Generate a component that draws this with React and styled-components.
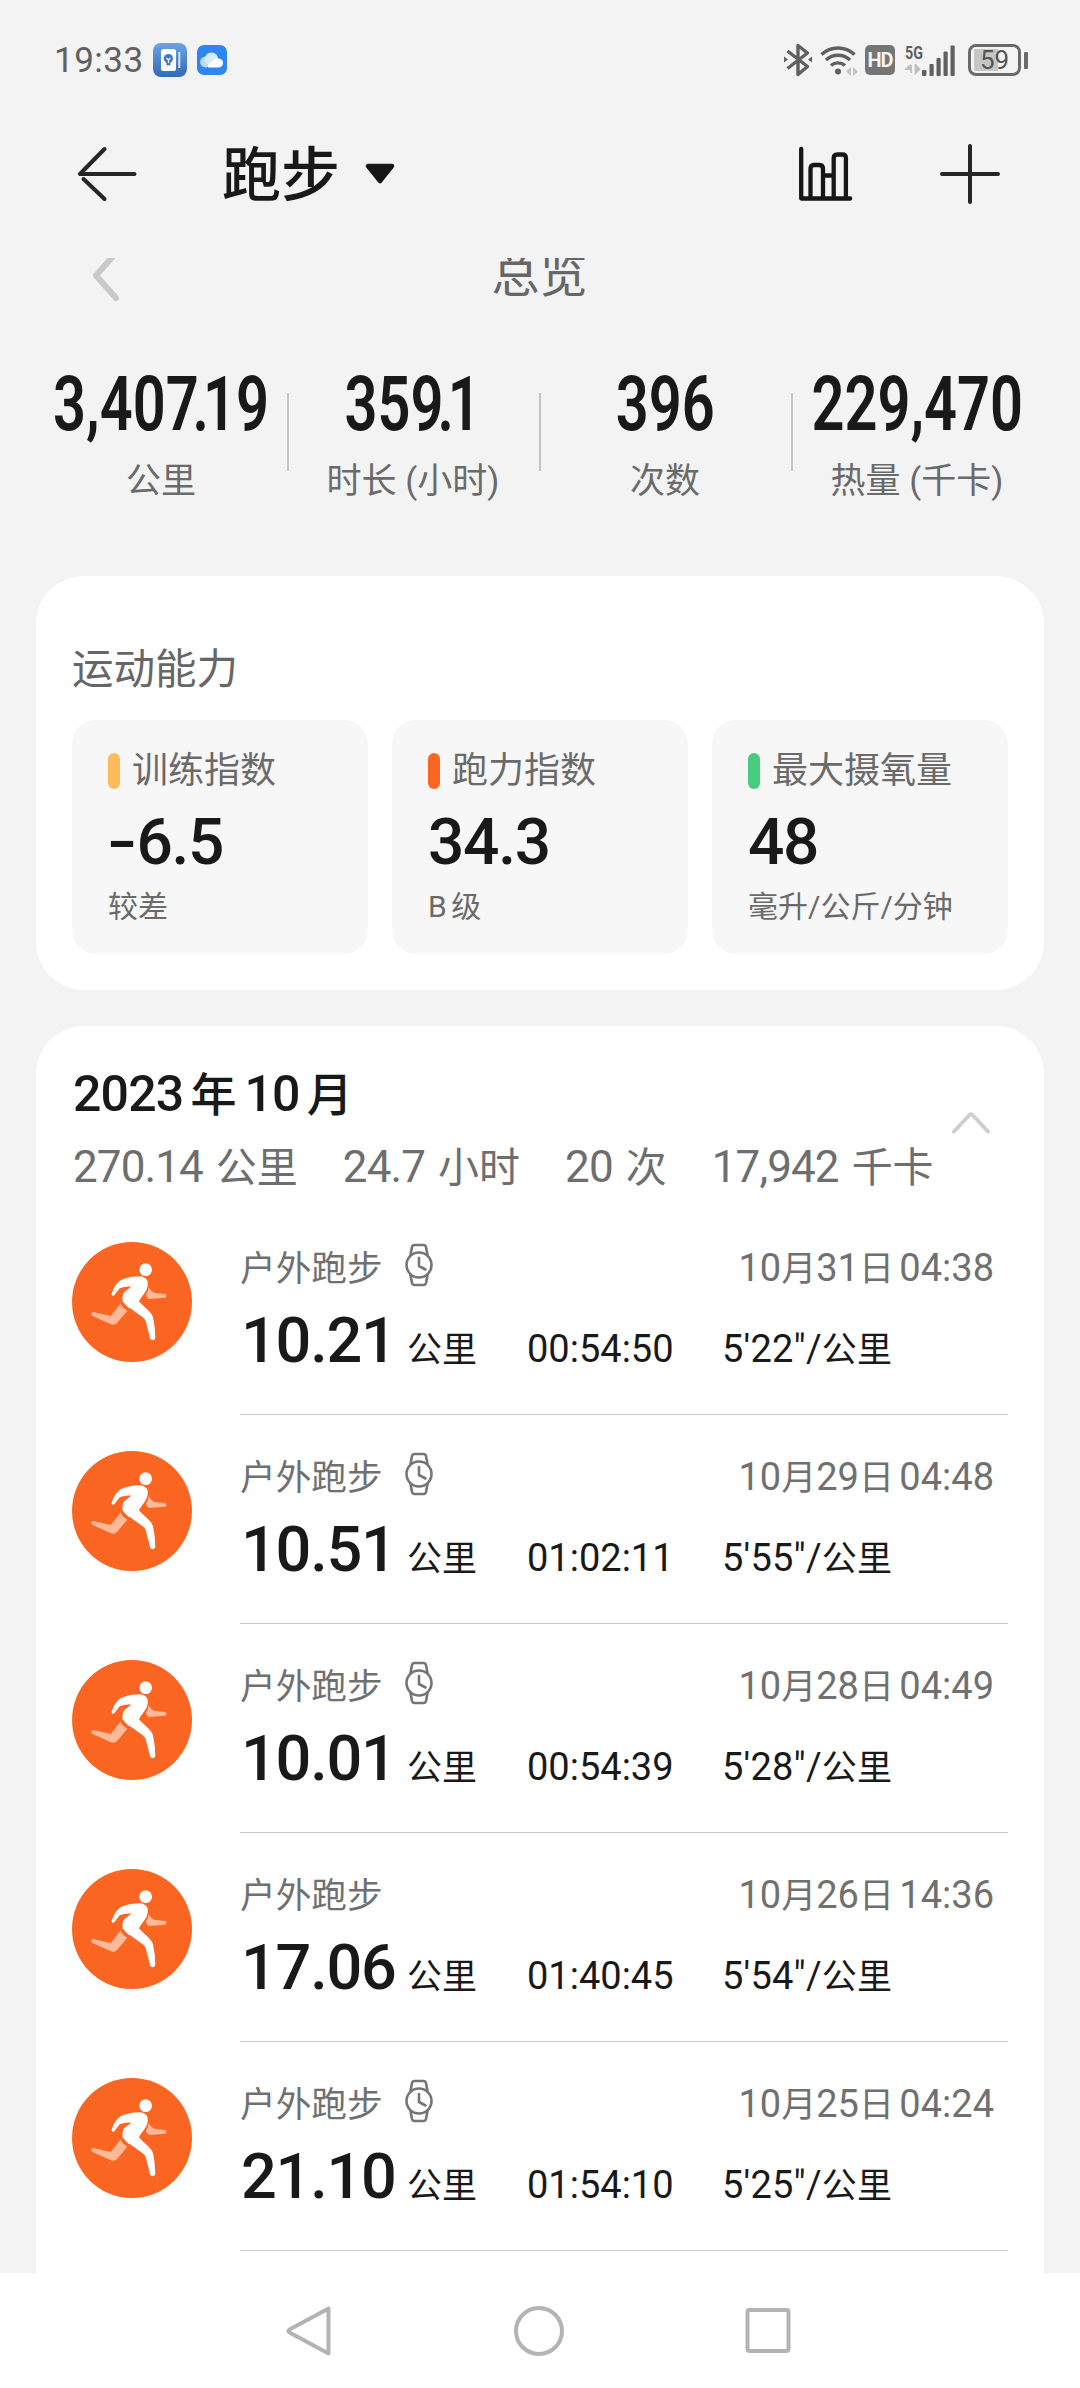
import React from 'react'
import styled, { createGlobalStyle } from 'styled-components'

// "tight" is the part of the number that is set closer together
const totals = [
  { start: '3,40', tight: '7.', end: '19', label: '公里' },
  { start: '35', tight: '9.', end: '1', label: '时长 (小时)' },
  { start: '396', label: '次数' },
  { start: '229,470', label: '热量 (千卡)' },
]

const abilities = [
  { name: '训练指数', sign: '-', value: '6.5', note: '较差', color: '#fdbb5c' },
  { name: '跑力指数', value: '34.3', note: 'B 级', color: '#fb6522' },
  { name: '最大摄氧量', value: '48', note: '毫升/公斤/分钟', color: '#47cc7f' },
]

const month = [
  { value: '270.14', unit: '公里' },
  { value: '24.7', unit: '小时' },
  { value: '20', unit: '次' },
  { value: '17,942', unit: '千卡' },
]

const runs = [
  { day: '31', time: '04:38', distance: '10.21', duration: '00:54:50', pace: '5\'22"', watch: true },
  { day: '29', time: '04:48', distance: '10.51', duration: '01:02:11', pace: '5\'55"', watch: true },
  { day: '28', time: '04:49', distance: '10.01', duration: '00:54:39', pace: '5\'28"', watch: true },
  { day: '26', time: '14:36', distance: '17.06', duration: '01:40:45', pace: '5\'54"', watch: false },
  { day: '25', time: '04:24', distance: '21.10', duration: '01:54:10', pace: '5\'25"', watch: true },
]

const NotesIcon = () => (
  <svg width="34" height="34" viewBox="0 0 34 34">
    <defs>
      <linearGradient id="notes" x1="0" y1="0" x2="0" y2="1">
        <stop offset="0" stopColor="#6aa3e6" />
        <stop offset="1" stopColor="#3567b8" />
      </linearGradient>
    </defs>
    <rect width="34" height="34" rx="8" fill="url(#notes)" />
    <rect x="8" y="6" width="15" height="22" rx="2.5" fill="#fff" />
    <circle cx="15.4" cy="15.6" r="4.6" fill="#3f77c9" />
    <path d="M13.4 19h4v3.4h-4z" fill="#3f77c9" />
    <path d="M13.3 15l2.1 2 2.1-2M15.4 17v3" stroke="#fff" strokeWidth="1.1" fill="none" />
    <path d="M26.3 9v16" stroke="#d5e3f7" strokeWidth="2" />
  </svg>
)

const CloudIcon = () => (
  <svg width="30" height="30" viewBox="0 0 30 30">
    <rect width="30" height="30" rx="7" fill="#2f86f3" />
    <circle cx="8.5" cy="17" r="5.4" fill="#bcdcff" />
    <circle cx="14.5" cy="14" r="6.6" fill="#d9ebff" />
    <path d="M11 22.4a6 6 0 0 1 4.6-6 6 6 0 0 1 7.2-2.6 4.4 4.4 0 0 1-.6 8.6z" fill="#fff" />
  </svg>
)

const BluetoothIcon = () => (
  <svg width="30" height="36" viewBox="0 0 30 36" fill="none" stroke="#606060" strokeWidth="3.4" strokeLinejoin="round">
    <path d="M4.5 9l20 15.5L15 32.5v-29L24.5 11 4.5 26.5" />
    <path d="M1 14.5l4 3-4 3zM29 14.5l-4 3 4 3z" fill="#606060" stroke="none" />
  </svg>
)

const WifiIcon = () => (
  <svg width="38" height="34" viewBox="0 0 38 34" fill="none" stroke="#606060" strokeWidth="3.4">
    <path d="M1.5 11.5a24 24 0 0 1 33 0M6 17a17.5 17.5 0 0 1 24 0M11 22.5a10.5 10.5 0 0 1 14 0" />
    <circle cx="18" cy="28.5" r="3" fill="#606060" stroke="none" />
    <path d="M31 24v9l-5-4.5zM33 24v9l5-4.5z" fill="#c4c4c4" stroke="none" />
  </svg>
)

const SignalIcon = () => (
  <svg width="52" height="34" viewBox="0 0 52 34">
    <path d="M6 22v8M6 22l-5 4h5M10.5 21v9l4.5-4.5" fill="#bfbfbf" stroke="#bfbfbf" strokeWidth="1.8" />
    <g fill="#606060">
      <rect x="17" y="27" width="4.4" height="6" rx="1" />
      <rect x="24.5" y="21" width="4.2" height="12" rx="1" />
      <rect x="31.5" y="15" width="4.2" height="18" rx="1" />
      <rect x="38.5" y="8.5" width="4.2" height="24.5" rx="1" />
      <rect x="45.5" y="2.5" width="4.2" height="30.5" rx="1" />
    </g>
  </svg>
)

const BackIcon = () => (
  <svg width="60" height="56" viewBox="0 0 60 56" fill="none" stroke="#262626" strokeWidth="4" strokeLinecap="round">
    <path d="M27.5 3L3 28h54.5M6.5 33L27.5 53" strokeLinejoin="round" />
  </svg>
)

const StatsIcon = () => (
  <svg width="56" height="56" viewBox="0 0 56 56" fill="none" stroke="#161616" strokeWidth="4.3" strokeLinecap="round" strokeLinejoin="round">
    <path d="M3.2 3v49.500h49M12.500 52V23q0-4 3.500-4h5.500q3.500 0 3.500 4v29M35.700 52V12q0-3.500 3.500-3.500h5.200q3.500 0 3.500 3.500v40M25 29.500h10.700" />
  </svg>
)

const PlusIcon = () => (
  <svg width="60" height="60" viewBox="0 0 60 60" stroke="#262626" strokeWidth="4" strokeLinecap="round">
    <path d="M2 30h56M30 2v56" />
  </svg>
)

const RunnerIcon = () => (
  <svg width="120" height="120" viewBox="36 36 360 360">
    <circle cx="216" cy="216" r="180" fill="#fb6522" />
    <g fill="#ffb898">
      <path d="M266 171q8 16 20 18l30 3q7 5 0 11l-48 4q-8-1-10-14 8-10 8-22z" />
      <path d="M182 220q4 14 20 22l-30 36q-7 8-16 6l-60-27q-6-8 4-11l52 12q14-16 30-38z" />
    </g>
    <g fill="#fff">
      <circle cx="257" cy="119" r="19" />
      <path d="M155 191q8-26 26-40 26-12 58-12 20 2 24 16 2 18-8 32l-19 27 30 28q10 9 13 20 7 32 7 62-6 12-15 3l-14-53q-2-7-9-12l-50-36q-18-16-5-40l24-16q-22-2-38 5l-16 21q-8 4-8-5z" />
      <path d="M189 192l26-23 30-5-9 60-30 10-18-20z" />
    </g>
  </svg>
)

const WatchIcon = () => (
  <svg width="28" height="44" viewBox="0 0 28 44" fill="none" stroke="#757575" strokeWidth="2.6" strokeLinejoin="round" strokeLinecap="round">
    <circle cx="14" cy="22" r="12.5" />
    <path d="M5.500 12l1.500-8q.500-2 2.500-2h9q2 0 2.500 2l1.500 8M5.500 32l1.500 8q.500 2 2.500 2h9q2 0 2.500-2l1.500-8M14 15v8l6.500 3.500" />
  </svg>
)

const App = () => {
  return (
    <>
      <GlobalStyle />
      <Screen>
        <StatusBar>
          <Clock>19:33</Clock>
          <NotesIcon />
          <CloudIcon />
          <StatusRight>
            <BluetoothIcon />
            <WifiIcon />
            <HdBadge>HD</HdBadge>
            <Signal>
              <SignalIcon />
              <Network>5G</Network>
            </Signal>
            <Battery>
              <BatteryBody><span>59</span></BatteryBody>
              <BatteryTip />
            </Battery>
          </StatusRight>
        </StatusBar>

        <Header>
          <BackIcon />
          <Title>跑步</Title>
          <svg width="32" height="24" viewBox="0 0 32 24">
            <path d="M4 4h24L16 19z" fill="#161616" stroke="#161616" strokeWidth="4.5" strokeLinejoin="round" />
          </svg>
          <HeaderActions>
            <StatsIcon />
            <PlusIcon />
          </HeaderActions>
        </Header>

        <Content>
          <Overview>
            <svg width="30" height="56" viewBox="0 0 30 56" fill="none" stroke="#c9c9c9" strokeWidth="6" strokeLinecap="round" strokeLinejoin="round">
              <path d="M26 5L6 27.500 26 50" />
            </svg>
            <OverviewTitle>总览</OverviewTitle>
          </Overview>
          <Totals>
            {totals.map((item) => (
              <Total key={item.label}>
                <TotalValue>
                  {item.start}
                  {item.tight && <Tight>{item.tight}</Tight>}
                  {item.end}
                </TotalValue>
                <TotalLabel>{item.label}</TotalLabel>
              </Total>
            ))}
          </Totals>

          <AbilityCard>
            <CardTitle>运动能力</CardTitle>
            <Tiles>
              {abilities.map((item) => (
                <Tile key={item.name}>
                  <TileHead>
                    <Pill $color={item.color} />
                    {item.name}
                  </TileHead>
                  <TileValue>
                    {item.sign && <Sign>{item.sign}</Sign>}
                    {item.value}
                  </TileValue>
                  <TileNote>{item.note}</TileNote>
                </Tile>
              ))}
            </Tiles>
          </AbilityCard>

          <MonthCard>
            <MonthHead>
              <MonthTitle>
                <b>2023</b><span>年</span><b>10</b><span>月</span>
              </MonthTitle>
              <MonthStats>
                {month.map((item) => (
                  <MonthStat key={item.unit}>
                    <span>{item.value}</span>
                    {item.unit}
                  </MonthStat>
                ))}
              </MonthStats>
              <Collapse width="40" height="24" viewBox="0 0 40 24" fill="none" stroke="#cfcfcf" strokeWidth="4" strokeLinecap="round" strokeLinejoin="round">
                <path d="M3 20.500L18.500 4q1.500-1.200 3 0L37 20.500" />
              </Collapse>
            </MonthHead>
            {runs.map((run) => (
              <Run key={run.day}>
                <RunnerIcon />
                <RunBody>
                  <RunTop>
                    <RunName>户外跑步</RunName>
                    {run.watch && <WatchIcon />}
                    <RunDate>
                      <em>10</em>月<em>{run.day}</em>日<em>{' ' + run.time}</em>
                    </RunDate>
                  </RunTop>
                  <RunBottom>
                    <Distance>{run.distance}</Distance>
                    <Unit>公里</Unit>
                    <Duration>{run.duration}</Duration>
                    <Pace>{run.pace}/<Unit>公里</Unit></Pace>
                  </RunBottom>
                </RunBody>
              </Run>
            ))}
          </MonthCard>
        </Content>

        <NavBar>
          <svg width="46" height="52" viewBox="0 0 46 52">
            <path d="M42.500 3.500v45L3.500 27.500q-2-1.500 0-3z" />
          </svg>
          <svg width="52" height="52" viewBox="0 0 52 52">
            <circle cx="26" cy="26" r="23" />
          </svg>
          <svg width="46" height="48" viewBox="0 0 46 48">
            <rect x="2.500" y="3" width="41" height="41" rx="2" />
          </svg>
        </NavBar>
      </Screen>
    </>
  )
}

const GlobalStyle = createGlobalStyle`
  body {
    margin: 0;
    background: #f3f3f3;
    font-family: Roboto, "Noto Sans CJK SC", sans-serif;
    color: #191919;
  }
  svg {
    display: block;
    flex: none;
  }
`

const Screen = styled.div`
  width: 1080px;
  height: 2388px;
  display: flex;
  flex-direction: column;
  overflow: hidden;
  white-space: nowrap;
`

const StatusBar = styled.div`
  height: 120px;
  flex: none;
  box-sizing: border-box;
  padding: 0 52px 0 54px;
  display: flex;
  align-items: center;
  gap: 10px;
`

const Clock = styled.div`
  width: 89px;
  font-size: 35px;
  letter-spacing: 0.5px;
  color: #606060;
`

const StatusRight = styled.div`
  margin-left: auto;
  display: flex;
  align-items: center;
  > svg:first-child {
    margin-right: 7px;
  }
`

const HdBadge = styled.div`
  width: 30px;
  height: 30px;
  margin: 0 10px 0 7px;
  border-radius: 5px;
  background: #757575;
  color: #f3f3f3;
  font-size: 20px;
  font-weight: 700;
  line-height: 31px;
  text-align: center;
  letter-spacing: -1px;
`

const Signal = styled.div`
  position: relative;
  margin-right: 11px;
`

const Network = styled.span`
  position: absolute;
  left: 0;
  top: 0;
  font-size: 19px;
  font-weight: 700;
  line-height: 19px;
  color: #606060;
  transform: scaleX(0.75);
  transform-origin: left;
`

const Battery = styled.div`
  display: flex;
  align-items: center;
  gap: 3px;
`

const BatteryBody = styled.div`
  width: 53px;
  height: 32px;
  box-sizing: border-box;
  border: 3.5px solid #6a6a6a;
  border-radius: 8px;
  font-size: 26px;
  line-height: 26px;
  text-align: center;
  color: #555;
  background: linear-gradient(90deg, transparent 3px, #c6c6c6 3px, #c6c6c6 27px, transparent 27px);
  background-clip: content-box;
  padding: 2px 0;
  span {
    display: block;
    margin-top: -2px;
  }
`

const BatteryTip = styled.div`
  width: 4px;
  height: 17px;
  border-radius: 1px;
  background: #6a6a6a;
`

const Header = styled.header`
  height: 108px;
  flex: none;
  margin-bottom: 30px;
  padding: 0 80px 0 77px;
  display: flex;
  align-items: center;
`

const Title = styled.h1`
  margin: 3px 24px 0 85px;
  font-size: 59px;
  line-height: 80px;
  font-weight: 500;
`

const HeaderActions = styled.div`
  margin-left: auto;
  display: flex;
  align-items: center;
  gap: 86px;
`

const Content = styled.main`
  flex: 1;
  min-height: 0;
  overflow: hidden;
`

const Overview = styled.div`
  height: 50px;
  margin-top: -7px;
  padding-left: 90px;
  display: flex;
  align-items: center;
`

const OverviewTitle = styled.div`
  flex: 1;
  padding-right: 121px;
  text-align: center;
  font-size: 48px;
  line-height: 50px;
  font-weight: 400;
  color: #666;
`

const Totals = styled.section`
  margin: 64px 37px 0 35px;
  display: grid;
  grid-template-columns: repeat(4, 252px);
`

const Total = styled.div`
  position: relative;
  height: 140px;
  display: flex;
  flex-direction: column;
  align-items: center;
  & + &::before {
    content: "";
    position: absolute;
    left: 0;
    top: 28px;
    width: 2px;
    height: 78px;
    background: #c4c4c4;
  }
`

const TotalValue = styled.div`
  font-size: 76px;
  line-height: 78px;
  font-weight: 600;
  transform: scaleX(0.76);
`

const Tight = styled.span`
  letter-spacing: -8px;
`

const TotalLabel = styled.div`
  margin-top: 18px;
  font-size: 35px;
  line-height: 42px;
  color: #6a6a6a;
`

const Card = styled.section`
  margin: 0 36px;
  box-sizing: border-box;
  border-radius: 48px;
  background: #fff;
`

const AbilityCard = styled(Card)`
  height: 414px;
  margin-top: 71px;
  padding: 66px 36px 0;
`

const CardTitle = styled.h2`
  margin: 0 0 22px;
  font-size: 41.5px;
  line-height: 56px;
  font-weight: 400;
  color: #666;
`

const Tiles = styled.div`
  display: grid;
  grid-template-columns: repeat(3, 296px);
  gap: 24px;
`

const Tile = styled.div`
  height: 234px;
  box-sizing: border-box;
  padding: 29px 0 0 36px;
  border-radius: 24px;
  background: #f7f7f7;
`

const TileHead = styled.div`
  display: flex;
  align-items: center;
  gap: 12px;
  font-size: 36px;
  line-height: 44px;
  color: #6a6a6a;
`

const Pill = styled.i`
  width: 12px;
  height: 36px;
  border-radius: 6px;
  background: ${({ $color }) => $color};
`

const TileValue = styled.div`
  margin-top: 12px;
  font-size: 64px;
  line-height: 76px;
  font-weight: 500;
  letter-spacing: -1.3px;
`

const Sign = styled.span`
  display: inline-block;
  margin: 0 5px 0 3px;
  transform: scaleX(1.35);
`

const TileNote = styled.div`
  margin-top: 6px;
  font-size: 30px;
  line-height: 40px;
  word-spacing: -3px;
  color: #6a6a6a;
`

const MonthCard = styled(Card)`
  height: 1400px;
  margin-top: 36px;
  padding: 36px 36px 0;
`

const MonthHead = styled.div`
  position: relative;
  height: 144px;
`

const MonthTitle = styled.h2`
  margin: 0 0 0 1px;
  height: 64px;
  display: flex;
  align-items: baseline;
  font-size: 46px;
  line-height: 64px;
  font-weight: 500;
  b {
    font-size: 50px;
    font-weight: 500;
    letter-spacing: -0.8px;
  }
  span {
    margin: 0 8px 0 7px;
  }
`

const MonthStats = styled.div`
  margin: 11px 0 0 1px;
  display: flex;
  gap: 45px;
`

const MonthStat = styled.div`
  font-size: 41px;
  line-height: 60px;
  color: #6e6e6e;
  span {
    margin-right: 13px;
    font-size: 44px;
    letter-spacing: -0.9px;
  }
`

const Collapse = styled.svg`
  position: absolute;
  right: 17px;
  top: 49px;
`

const Run = styled.div`
  height: 209px;
  display: flex;
  align-items: flex-start;
  gap: 48px;
  > svg {
    margin-top: 36px;
  }
`

const RunBody = styled.div`
  flex: 1;
  height: 209px;
  box-sizing: border-box;
  border-bottom: 1px solid #c8c8c8;
`

const RunTop = styled.div`
  height: 46px;
  margin-top: 36px;
  display: flex;
  align-items: center;
  color: #707070;
`

const RunName = styled.div`
  margin-right: 22px;
  font-size: 35.7px;
`

const RunDate = styled.div`
  margin: 0 14px 0 auto;
  font-size: 35px;
  word-spacing: -4px;
  em {
    font-style: normal;
    font-size: 38px;
    white-space: pre;
  }
`

const RunBottom = styled.div`
  height: 70px;
  margin-top: 11px;
  display: flex;
  align-items: baseline;
`

const Distance = styled.div`
  width: 166px;
  padding-left: 1px;
  font-size: 63px;
  line-height: 84px;
  font-weight: 500;
  letter-spacing: -1.2px;
`

const Unit = styled.span`
  font-size: 35px;
`

const Duration = styled.div`
  width: 195px;
  margin-left: 50px;
  font-size: 38px;
`

const Pace = styled.div`
  font-size: 38px;
  letter-spacing: 0.2px;
`

const NavBar = styled.nav`
  height: 115px;
  flex: none;
  display: flex;
  align-items: center;
  justify-content: space-between;
  box-sizing: border-box;
  padding: 0 289px 0 286px;
  background: #fff;
  path, circle, rect {
    fill: none;
    stroke: #b3b3b3;
    stroke-width: 4;
    stroke-linejoin: round;
  }
`

export default App
